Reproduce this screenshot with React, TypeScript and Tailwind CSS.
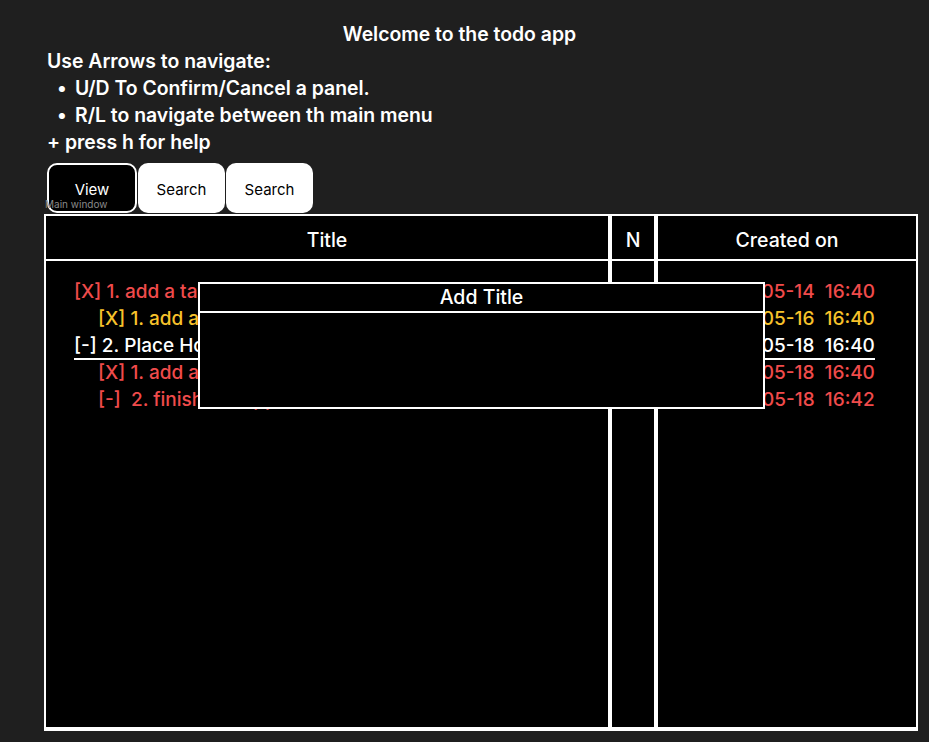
import React from "react"

type Row = { text: string; date: string; color: string; indent: boolean; selected?: boolean }

const rows: Row[] = [
    { text: "[X] 1. add a task", date: "2024-05-14  16:40", color: "text-[#f04b4b]", indent: false },
    { text: "[X] 1. add a subtask", date: "2024-05-16  16:40", color: "text-[#f7c22b]", indent: true },
    { text: "[-] 2. Place Holder", date: "2024-05-18  16:40", color: "text-white", indent: false, selected: true },
    { text: "[X] 1. add a subtask", date: "2024-05-18  16:40", color: "text-[#f04b4b]", indent: true },
    { text: "[-]  2. finish the app", date: "2024-05-18  16:42", color: "text-[#f04b4b]", indent: true },
]

function Tab({ label, active }: { label: string; active?: boolean }) {
    return (
        <div
            className={`h-[50px] flex items-center justify-center rounded-[10px] text-[15px] pt-[4px] ${
                active ? "w-[90px] bg-black text-white border-2 border-white" : "w-[87px] bg-white text-black"
            }`}
        >
            {label}
        </div>
    )
}

export default function App() {
    return (
        <div
            className="min-h-[742px] w-full bg-[#1f1f1f] text-white"
            style={{ fontFamily: "Inter, 'Noto Sans', sans-serif" }}
        >
            <div className="w-[919px] pt-[21px] text-[19.4px] leading-[27px] font-semibold">
                <div className="text-center">Welcome to the todo app</div>
                <div className="pl-[47px]">
                    <div>Use Arrows to navigate:</div>
                    <div className="flex">
                        <span className="ml-[10px] w-[18px]">•</span>
                        <span>U/D To Confirm/Cancel a panel.</span>
                    </div>
                    <div className="flex">
                        <span className="ml-[10px] w-[18px]">•</span>
                        <span>R/L to navigate between th main menu</span>
                    </div>
                    <div>+ press h for help</div>
                </div>
            </div>

            <div className="pl-[44px] pr-[11px]">
                <div className="relative mt-[7px] pl-[3px] flex gap-[1px] font-normal">
                    <Tab label="View" active />
                    <Tab label="Search" />
                    <Tab label="Search" />
                    <span className="absolute left-[1px] top-[36px] text-[10px] leading-none text-[#8a8a8a]">
                        Main window
                    </span>
                </div>

                <div className="relative mt-[1px] flex h-[517px] bg-black border-b-2 border-white text-[19.5px] font-medium">
                    <div className="flex-1 flex flex-col border-2 border-white">
                        <div className="h-[45px] flex items-center justify-center border-b-2 border-white pt-[7px]">Title</div>
                        <div className="pt-[17px] pl-[28px] text-[19px]">
                            {rows.map((r, i) => (
                                <div key={i} className={`h-[27px] leading-[27px] ${r.color} ${r.indent ? "pl-[24px]" : ""}`}>
                                    <span className={`inline-block whitespace-pre ${r.selected ? "border-b-2 border-white leading-[25px]" : ""}`}>
                                        {r.text}
                                    </span>
                                </div>
                            ))}
                        </div>
                    </div>
                    <div className="w-[46px] flex flex-col border-2 border-white">
                        <div className="h-[45px] flex items-center justify-center border-b-2 border-white pt-[7px]">N</div>
                    </div>
                    <div className="w-[262px] flex flex-col border-2 border-white">
                        <div className="h-[45px] flex items-center justify-center border-b-2 border-white pt-[7px]">Created on</div>
                        <div className="pt-[17px] text-[19px]">
                            {rows.map((r, i) => (
                                <div key={i} className={`h-[27px] leading-[27px] pl-[6px] text-center ${r.color}`}>
                                    <span className={`inline-block whitespace-pre ${r.selected ? "border-b-2 border-white leading-[25px]" : ""}`}>
                                        {r.date}
                                    </span>
                                </div>
                            ))}
                        </div>
                    </div>

                    <div className="absolute left-[154px] top-[68px] w-[567px] h-[127px] bg-black border-2 border-white">
                        <div className="h-[29px] flex items-center justify-center border-b-2 border-white">Add Title</div>
                    </div>
                </div>
            </div>
        </div>
    )
}
